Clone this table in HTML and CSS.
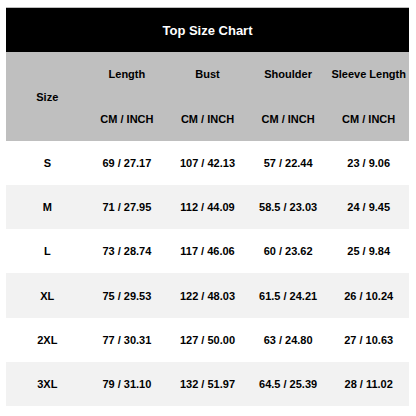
FILE: index.html
```html
<!DOCTYPE html>
<html>
<head>
<meta charset="utf-8">
<link rel="stylesheet" href="styles.css">
</head>
<body>
<div class="chart">
  <div class="title">Top Size Chart</div>
  <div class="head">
    <div class="size-h">Size</div>
    <div class="hc">Length</div>
    <div class="hc">Bust</div>
    <div class="hc">Shoulder</div>
    <div class="hc">Sleeve Length</div>
    <div class="hc">CM / INCH</div>
    <div class="hc">CM / INCH</div>
    <div class="hc">CM / INCH</div>
    <div class="hc">CM / INCH</div>
  </div>
  <div class="row"><div>S</div><div>69 / 27.17</div><div>107 / 42.13</div><div>57 / 22.44</div><div>23 / 9.06</div></div>
  <div class="row alt"><div>M</div><div>71 / 27.95</div><div>112 / 44.09</div><div>58.5 / 23.03</div><div>24 / 9.45</div></div>
  <div class="row"><div>L</div><div>73 / 28.74</div><div>117 / 46.06</div><div>60 / 23.62</div><div>25 / 9.84</div></div>
  <div class="row alt"><div>XL</div><div>75 / 29.53</div><div>122 / 48.03</div><div>61.5 / 24.21</div><div>26 / 10.24</div></div>
  <div class="row"><div>2XL</div><div>77 / 30.31</div><div>127 / 50.00</div><div>63 / 24.80</div><div>27 / 10.63</div></div>
  <div class="row alt"><div>3XL</div><div>79 / 31.10</div><div>132 / 51.97</div><div>64.5 / 25.39</div><div>28 / 11.02</div></div>
</div>
</body>
</html>
```
FILE: styles.css
```css
html, body {
  margin: 0;
  padding: 0;
  background: #ffffff;
}
body {
  padding: 7px 0 0 6px;
  font-family: "Liberation Sans", Arial, sans-serif;
  font-weight: bold;
  color: #000;
}
.chart {
  width: 403px;
}
.title {
  height: 45px;
  background: #000;
  color: #fff;
  font-size: 13px;
  display: flex;
  align-items: center;
  justify-content: center;
  border-top: 1px solid #bdbdbd;
  box-sizing: border-box;
}
.head {
  background: #bfbfbf;
  display: grid;
  grid-template-columns: repeat(5, 1fr);
  grid-template-rows: 44.5px 44.5px;
  font-size: 11px;
}
.head > div {
  display: flex;
  align-items: center;
  justify-content: center;
}
.size-h {
  grid-row: 1 / span 2;
  grid-column: 1;
  padding-left: 2px;
}
.row {
  display: grid;
  grid-template-columns: repeat(5, 1fr);
  height: 44.17px;
  font-size: 11px;
}
.row > div {
  display: flex;
  align-items: center;
  justify-content: center;
}
.row > div:first-child {
  padding-left: 2px;
}
.alt {
  background: #f2f2f2;
}
```
